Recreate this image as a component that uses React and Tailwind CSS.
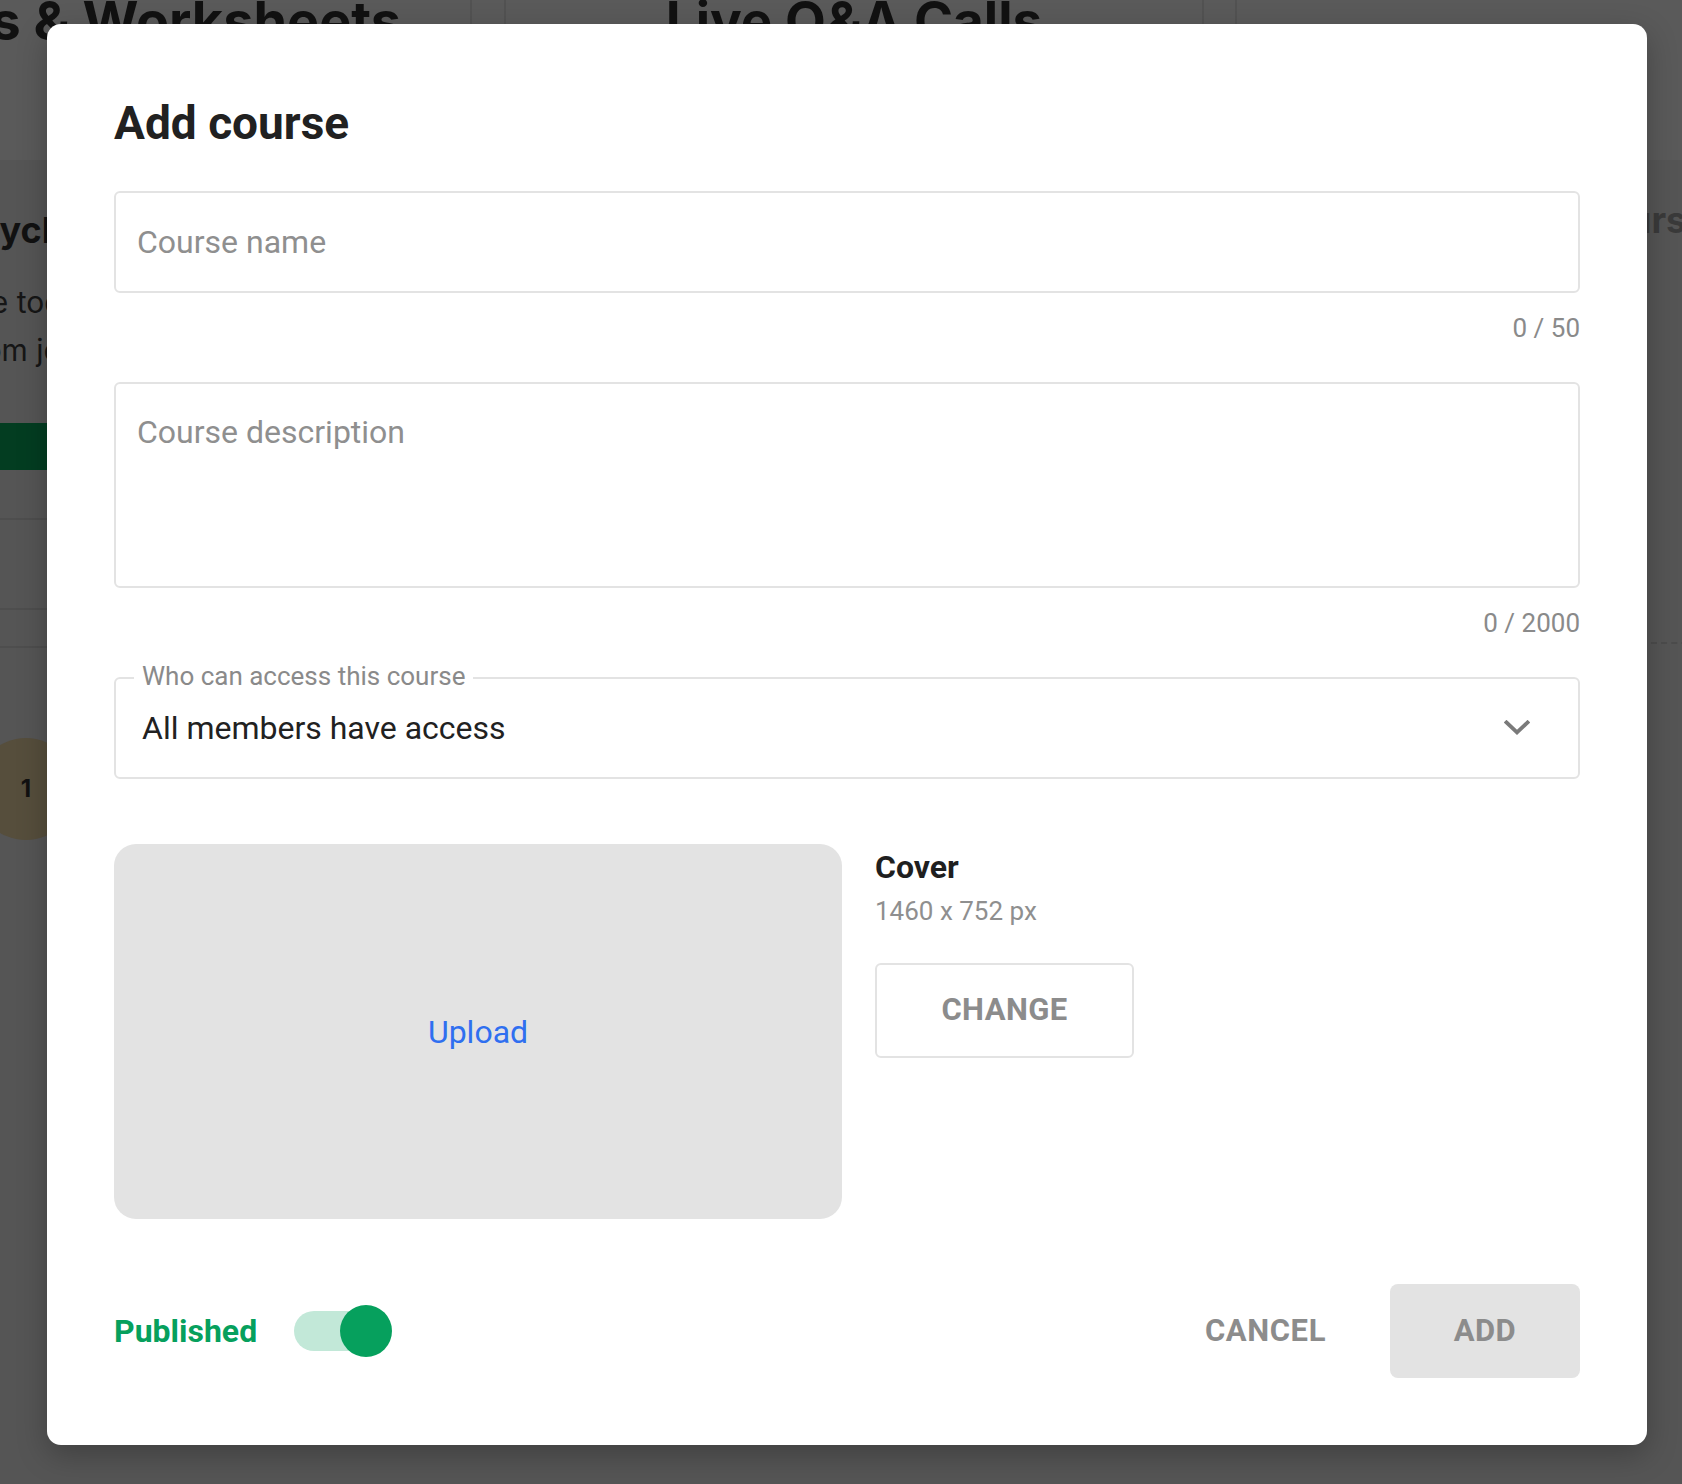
import React from 'react';

const ChevronDown = () => (
  <svg width="26" height="16" viewBox="0 0 26 16" fill="none">
    <path d="M2.5 2.5L13 12.5L23.5 2.5" stroke="#7a7a7a" strokeWidth="3.8" strokeLinecap="square" />
  </svg>
);

const BackgroundPage = () => (
  <div className="h-full w-full bg-[#555555] font-['Inter',sans-serif]">
    {/* tab header */}
    <div className="flex h-[160px] bg-[#5a5a5a] overflow-hidden">
      <div className="w-[472px] flex justify-end pr-[69px] border-r-2 border-[#525252]">
        <span className="-mt-[10px] text-[54px] leading-[62px] font-bold text-[#111] whitespace-nowrap">Guides &amp; Worksheets</span>
      </div>
      <div className="w-[32px]" />
      <div className="w-[700px] flex justify-center border-l-2 border-r-2 border-[#525252]">
        <span className="-mt-[10px] text-[53px] leading-[62px] font-bold text-[#111] whitespace-nowrap">Live Q&amp;A Calls</span>
      </div>
      <div className="w-[33px] border-r-2 border-[#525252]" />
    </div>

    <div className="flex justify-between overflow-hidden">
      {/* left course card */}
      <div className="w-[420px] -ml-[68px] shrink-0">
        <div className="pl-6 pt-[48px]">
          <p className="text-[36px] leading-[44px] font-bold text-[#111] whitespace-nowrap">Psychology</p>
          <p className="mt-[26px] -ml-[15px] text-[30px] leading-[48px] text-[#161616] whitespace-nowrap">Take today</p>
          <p className="text-[30px] leading-[48px] text-[#161616] whitespace-nowrap">From jet lag</p>
        </div>
        <div className="mt-[49px] h-[47px] bg-[#033d21]" />
        <div className="h-[50px] border-b-2 border-[#4e4e4e]" />
        <div className="h-[90px] border-b-2 border-[#4e4e4e]" />
        <div className="h-[38px] border-b-2 border-[#4e4e4e]" />
        <div className="mt-[90px] ml-[43px] w-[102px] h-[102px] rounded-full bg-[#564e3c] flex items-center justify-center">
          <span className="text-[24px] font-bold text-[#111]">1</span>
        </div>
      </div>

      {/* right course card */}
      <div className="w-[300px] -mr-[198px] shrink-0 pt-[38px]">
        <p className="text-[36px] leading-[44px] font-bold text-[#3a3a3a] whitespace-nowrap">Hours</p>
        <div className="mt-[400px] border-b-2 border-dashed border-[#4c4c4c]" />
      </div>
    </div>
  </div>
);

const Counter = ({ children }) => (
  <p className="mt-[20px] text-right text-[26px] leading-[30px] text-[#8a8a8a]">{children}</p>
);

export default function App() {
  return (
    <div className="relative w-[1682px] h-[1484px] overflow-hidden">
      <BackgroundPage />

      {/* dialog */}
      <div className="absolute left-[47px] top-[24px] w-[1600px] h-[1421px] bg-white rounded-[14px] shadow-[0_10px_30px_rgba(0,0,0,0.25)] px-[67px] pt-[72px] pb-[67px] flex flex-col font-['Roboto',sans-serif]">
        <h2 className="text-[46px] leading-[54px] font-bold text-[#212121]">Add course</h2>

        <div className="mt-[41px] h-[102px] border-2 border-[#e3e3e3] rounded-[6px] px-[21px] flex items-center">
          <span className="text-[32px] text-[#8f8f8f]">Course name</span>
        </div>
        <Counter>0 / 50</Counter>

        <div className="mt-[39px] h-[206px] border-2 border-[#e3e3e3] rounded-[6px] px-[21px] pt-[29px]">
          <span className="text-[32px] leading-[38px] text-[#8f8f8f]">Course description</span>
        </div>
        <Counter>0 / 2000</Counter>

        <div className="relative mt-[39px] h-[102px] border-2 border-[#e3e3e3] rounded-[6px] pl-[26px] pr-[48px] flex items-center justify-between">
          <span className="absolute -top-[18px] left-[18px] px-[8px] bg-white text-[26px] leading-[30px] text-[#8a8a8a]">
            Who can access this course
          </span>
          <span className="text-[32px] text-[#212121]">All members have access</span>
          <ChevronDown />
        </div>

        <div className="mt-[65px] flex gap-[33px]">
          <div className="w-[728px] h-[375px] bg-[#e3e3e3] rounded-[22px] flex items-center justify-center">
            <span className="text-[32px] text-[#2f6ff0]">Upload</span>
          </div>
          <div className="pt-[4px] flex flex-col items-start">
            <p className="text-[32px] leading-[38px] font-bold text-[#1f1f1f]">Cover</p>
            <p className="mt-[9px] text-[26px] leading-[32px] text-[#8f8f8f]">1460 x 752 px</p>
            <button className="mt-[36px] w-[259px] h-[95px] border-2 border-[#e3e3e3] rounded-[6px] text-[31px] tracking-[0.4px] font-bold text-[#8c8c8c]">
              CHANGE
            </button>
          </div>
        </div>

        <div className="mt-[65px] flex items-center">
          <span className="text-[32px] font-bold text-[#06a05d]">Published</span>
          <div className="ml-[37px] relative w-[98px] h-[52px] flex items-center">
            <div className="w-[94px] h-[40px] rounded-full bg-[#c2e8d8]" />
            <div className="absolute right-0 top-0 w-[52px] h-[52px] rounded-full bg-[#06a05d]" />
          </div>
          <div className="flex-1" />
          <button className="text-[31px] tracking-[0.6px] font-bold text-[#8c8c8c]">CANCEL</button>
          <button className="ml-[64px] w-[190px] h-[94px] bg-[#e3e3e3] rounded-[8px] text-[31px] tracking-[0.4px] font-bold text-[#8c8c8c]">
            ADD
          </button>
        </div>
      </div>
    </div>
  );
}
